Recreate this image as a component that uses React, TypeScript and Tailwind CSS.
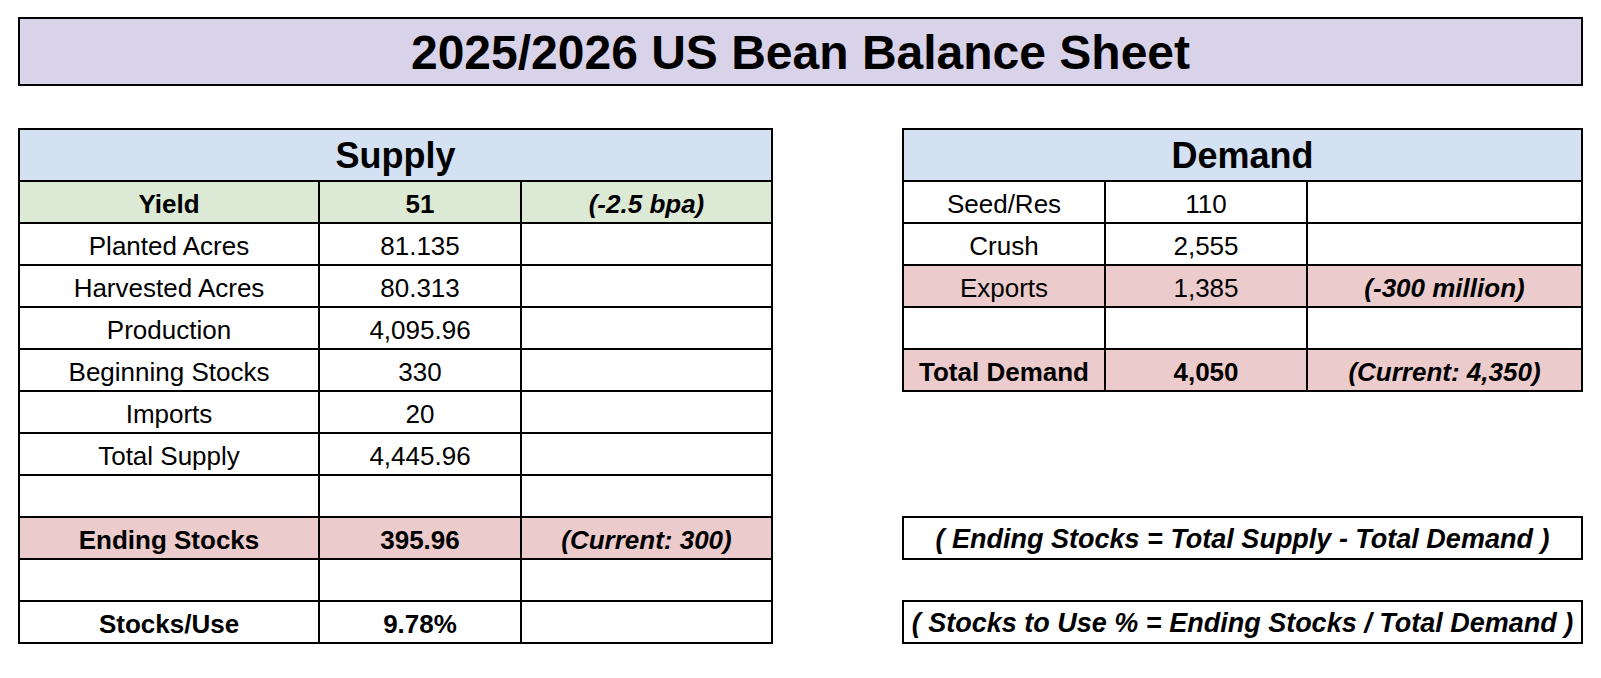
import React from "react";

type Cell = {
  text?: string;
  bold?: boolean;
  italic?: boolean;
};

type Row = {
  cells: [Cell, Cell, Cell];
  bg?: "green" | "pink";
};

const supplyRows: Row[] = [
  {
    bg: "green",
    cells: [
      { text: "Yield", bold: true },
      { text: "51", bold: true },
      { text: "(-2.5 bpa)", bold: true, italic: true },
    ],
  },
  { cells: [{ text: "Planted Acres" }, { text: "81.135" }, {}] },
  { cells: [{ text: "Harvested Acres" }, { text: "80.313" }, {}] },
  { cells: [{ text: "Production" }, { text: "4,095.96" }, {}] },
  { cells: [{ text: "Beginning Stocks" }, { text: "330" }, {}] },
  { cells: [{ text: "Imports" }, { text: "20" }, {}] },
  { cells: [{ text: "Total Supply" }, { text: "4,445.96" }, {}] },
  { cells: [{}, {}, {}] },
  {
    bg: "pink",
    cells: [
      { text: "Ending Stocks", bold: true },
      { text: "395.96", bold: true },
      { text: "(Current: 300)", bold: true, italic: true },
    ],
  },
  { cells: [{}, {}, {}] },
  {
    cells: [
      { text: "Stocks/Use", bold: true },
      { text: "9.78%", bold: true },
      {},
    ],
  },
];

const demandRows: Row[] = [
  { cells: [{ text: "Seed/Res" }, { text: "110" }, {}] },
  { cells: [{ text: "Crush" }, { text: "2,555" }, {}] },
  {
    bg: "pink",
    cells: [
      { text: "Exports" },
      { text: "1,385" },
      { text: "(-300 million)", bold: true, italic: true },
    ],
  },
  { cells: [{}, {}, {}] },
  {
    bg: "pink",
    cells: [
      { text: "Total Demand", bold: true },
      { text: "4,050", bold: true },
      { text: "(Current: 4,350)", bold: true, italic: true },
    ],
  },
];

function BalanceTable({
  title,
  rows,
  cols,
}: {
  title: string;
  rows: Row[];
  cols: string;
}) {
  return (
    <div className={`grid ${cols} gap-[2px] bg-black p-[2px]`}>
      <div className="col-span-3 h-[50px] pt-[2px] bg-[#d3e1f2] flex items-center justify-center text-[36px] font-bold leading-none">
        {title}
      </div>
      {rows.map((row, i) =>
        row.cells.map((c, j) => (
          <div
            key={`${i}-${j}`}
            className={[
              "h-[40px] pt-[3px] flex items-center justify-center text-[26px] leading-none whitespace-nowrap",
              row.bg === "green"
                ? "bg-[#dce9d5]"
                : row.bg === "pink"
                  ? "bg-[#ebcbcb]"
                  : "bg-white",
              c.bold ? "font-bold" : "",
              c.italic ? "italic" : "",
            ].join(" ")}
          >
            {c.text}
          </div>
        ))
      )}
    </div>
  );
}

function FormulaBox({ children }: { children: React.ReactNode }) {
  return (
    <div className="h-[44px] pt-[3px] border-2 border-black bg-white flex items-center justify-center text-[27px] font-bold italic leading-none whitespace-nowrap">
      {children}
    </div>
  );
}

export default function App() {
  return (
    <div
      className="w-[1601px] h-[678px] bg-white text-black px-[18px] pt-[17px]"
      style={{ fontFamily: '"Liberation Sans", Arial, sans-serif' }}
    >
      <div className="h-[69px] pt-[3px] border-2 border-black bg-[#d8d3e8] flex items-center justify-center text-[48px] font-bold leading-none">
        2025/2026 US Bean Balance Sheet
      </div>

      <div className="mt-[42px] flex justify-between items-start">
        <div className="w-[755px]">
          <BalanceTable
            title="Supply"
            rows={supplyRows}
            cols="grid-cols-[298px_200px_249px]"
          />
        </div>

        <div className="w-[681px] flex flex-col">
          <BalanceTable
            title="Demand"
            rows={demandRows}
            cols="grid-cols-[200px_200px_273px]"
          />
          <div className="mt-[124px]">
            <FormulaBox>( Ending Stocks = Total Supply - Total Demand )</FormulaBox>
          </div>
          <div className="mt-[40px]">
            <FormulaBox>( Stocks to Use % = Ending Stocks / Total Demand )</FormulaBox>
          </div>
        </div>
      </div>
    </div>
  );
}
